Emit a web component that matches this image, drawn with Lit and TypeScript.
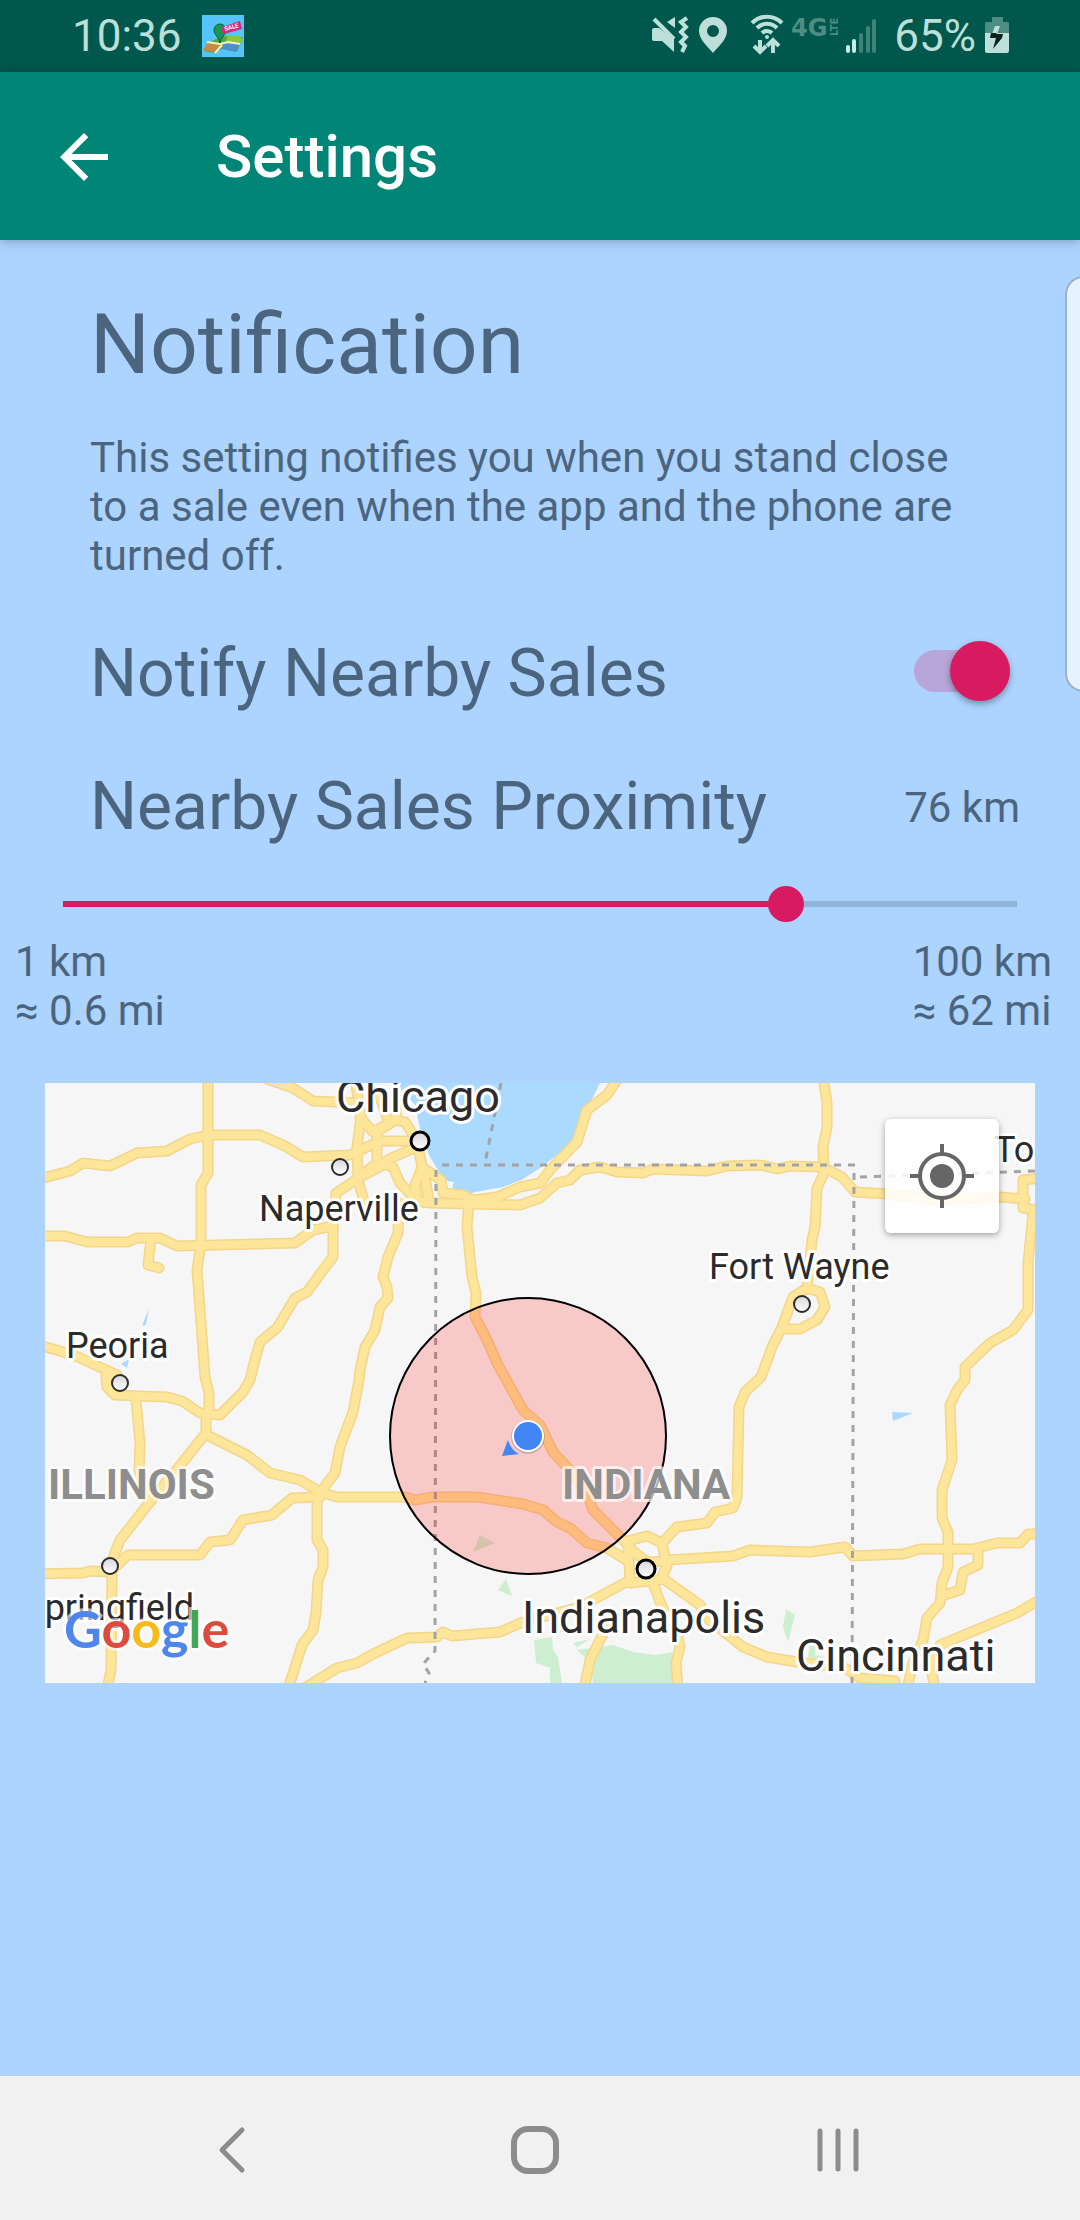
import { LitElement, html, svg, css } from "lit";
import { customElement, state } from "lit/decorators.js";

/* Road centre lines on the 990 x 600 map canvas. */
const ROADS: string[] = [
  "163,-6 163,90 156,102 156,160 152,187 160,294 164,310 164,329 161,334 161,350 133,385 112,410 75,457 70,470 65,483 67,490 66,587 62,606",
  "-6,96 25,88 38,80 65,83 92,70 122,68 145,56 163,52 215,52 240,63 258,74 305,72 335,58 372,58",
  "-6,153 20,153 42,159 83,159 92,155 115,155 132,163 250,160 268,147 288,143",
  "106,156 103,182 114,185",
  "-6,262 15,268 33,274 72,292",
  "72,292 61,293 62,304 70,312 122,314 137,318 155,330 175,332 198,309 205,297 208,284 215,259 232,245 250,215 262,209 278,187 288,174 288,144 291,110 315,94 338,82 344,76 372,64",
  "91,317 95,360 94,387 103,415",
  "162,352 202,372 225,390 255,397 275,409 292,414 360,414 370,417 388,414 432,414 478,421 498,427 512,439 525,445 542,460 562,465 583,478",
  "-6,491 38,490 45,488 65,489 83,472 155,472 165,459 185,457 198,437 227,432 247,415 275,414",
  "272,412 272,457 278,467 278,484 273,497 271,530 268,547 257,562 243,606",
  "277,407 290,390 295,364 308,329 314,297 315,287 320,264 330,247 335,224 343,215 342,204 338,194 343,174 353,150 354,120",
  "258,606 292,585 312,580 328,571 362,555 392,554 398,549 407,553 455,549 478,539 535,524 585,497",
  "222,-4 248,5 268,18 312,20",
  "310,-4 316,34 312,64 313,97 320,122",
  "315,34 328,49 344,40 335,14",
  "332,47 332,80 313,95",
  "350,18 352,36 330,50",
  "335,46 348,37 360,39 372,58 377,84 396,97 398,110 418,112 428,117 452,114 475,104 495,100 505,87 532,59 542,27 562,12 574,-6",
  "335,80 348,84 355,100 370,116",
  "377,84 370,102 372,118",
  "379,88 384,118",
  "370,118 385,120 425,121 475,122 495,115 512,100 525,97 535,87 555,84 572,89 598,90 608,86 662,88 682,83 715,82 733,86 745,83 778,84 797,94 810,109 842,111 895,117 955,114 980,116",
  "424,117 422,144 427,194 431,210 430,234 442,257 452,280 478,327 495,342 508,369 522,384 542,410 548,427 565,444 585,464",
  "583,458 602,453 617,460 622,484 615,497 585,500 583,458",
  "583,464 602,479 622,478",
  "618,459 632,444 662,440 670,429 688,425 692,414 694,324 700,309 716,294 727,264 737,244 748,214 762,205 775,209 780,224 772,237 755,246 737,246",
  "762,206 767,157 770,144 772,105 779,90 778,64 782,44 782,20 778,-6",
  "622,477 688,473 705,467 765,469 800,464 808,473 858,471 875,466 928,466 952,460 975,460 983,451 996,451",
  "620,497 655,522 662,535 698,564 722,574 752,579 798,584 815,595 850,598",
  "608,500 617,524 632,550 635,564 631,580 633,606",
  "565,538 555,557 545,577 539,606",
  "996,95 978,97 978,125 996,128",
  "988,130 983,180 983,227 968,247 945,260 920,284 920,297 912,307 905,322 907,377 897,407 897,435 903,449 903,484 897,500 895,520 882,535 878,557 868,580 862,606",
  "933,467 933,482 918,489 915,507 900,512",
  "996,516 972,530 895,562 885,580 890,606",
];

const BORDERS: string[] = [
  "397,82 810,82",
  "391,87 390,568 378,581 384,590 380,600",
  "809,90 807,600",
  "815,94 990,88",
  "456,0 448,40 440,80",
];

interface Place {
  name: string;
  x: number;
  y: number;
  kind: "town" | "city" | "state";
  end?: boolean;
}

const PLACES: Place[] = [
  { name: "Chicago", x: 291, y: 29, kind: "city" },
  { name: "Naperville", x: 214, y: 138, kind: "town" },
  { name: "Peoria", x: 21, y: 275, kind: "town" },
  { name: "Fort Wayne", x: 664, y: 196, kind: "town" },
  { name: "To", x: 949, y: 79, kind: "town" },
  { name: "Springfield", x: 149, y: 537, kind: "town", end: true },
  { name: "Indianapolis", x: 477, y: 550, kind: "city" },
  { name: "Cincinnati", x: 751, y: 588, kind: "city" },
  { name: "ILLINOIS", x: 3, y: 416, kind: "state" },
  { name: "INDIANA", x: 517, y: 416, kind: "state" },
];

const DOTS = [
  { x: 75, y: 300, big: false },
  { x: 65, y: 483, big: false },
  { x: 295, y: 84, big: false },
  { x: 757, y: 221, big: false },
  { x: 375, y: 58, big: true },
  { x: 601, y: 486, big: true },
];

@customElement("status-bar")
class StatusBar extends LitElement {
  static styles = css`
    :host {
      display: flex;
      align-items: center;
      gap: 8px;
      height: 72px;
      padding: 0 70px 0 72px;
      background: #00574b;
      color: #bcdfda;
      font-size: 44px;
      line-height: 72px;
    }
    .app {
      width: 42px;
      height: 42px;
      margin: 0 auto 0 12px;
    }
    .icon {
      height: 72px;
      flex: none;
    }
    .level {
      margin-left: 8px;
    }
  `;

  render() {
    return html`
      <time>10:36</time>
      <svg class="app" viewBox="0 0 42 42" aria-hidden="true">
        <rect width="42" height="42" fill="#55c4fa" />
        <path d="M8 27L20 21 32 22 41 22 35 37 20 32 11 38 2 36z" fill="#5aa54b" />
        <path d="M6 27L19 29 12 37 1 35z" fill="#c98a45" />
        <path d="M22 29L37 29 34 37 20 34 14 37z" fill="#4d90c4" />
        <path d="M26 21L38 21 41 27 31 29 23 28z" fill="#8cc63f" />
        <path d="M5 27L18 29 26 27 38 29M20 30L13 38" stroke="#f7f3a8" stroke-width="2" fill="none" />
        <path d="M18 28C17 22 12 20 12 15a6 6 0 0 1 12 0C24 20 19 22 18 28z" fill="#159957" stroke="#0a5c3a" stroke-width="1" />
        <path d="M20 12L38 6 40 14 22 19 19 16z" fill="#d62a7c" />
        <text x="23" y="16" transform="rotate(-15 23 16)" font-size="6" font-weight="700" fill="#fff">SALE</text>
      </svg>
      <svg class="icon" width="40" viewBox="0 0 40 72" fill="#bcdfda" aria-hidden="true">
        <path d="M2 30q0-2 2-2h5L24 39v13L12 41H4q-2 0-2-2z" />
        <path d="M4 19L24 39" stroke="#bcdfda" stroke-width="4" />
        <path d="M25 17v11l-8-6z" />
        <path d="M37 18l-6 4 5 5-5 5 5 5-5 5 4 4-3 6" fill="none" stroke="#bcdfda" stroke-width="4" />
      </svg>
      <svg class="icon" width="30" viewBox="0 0 30 72" aria-hidden="true">
        <path fill="#bcdfda" fill-rule="evenodd" d="M15 17a14 14 0 0 0-14 14c0 8 8 15 14 22 6-7 14-14 14-22a14 14 0 0 0-14-14zm0 8a6 6 0 1 1 0 12 6 6 0 0 1 0-12z" />
      </svg>
      <svg class="icon" width="48" viewBox="0 0 48 72" fill="none" stroke="#bcdfda" stroke-width="4" aria-hidden="true">
        <path d="M16 23a21 21 0 0 1 30 0M21 28a14 14 0 0 1 20 0M26 33a7 7 0 0 1 10 0" />
        <circle cx="31" cy="37" r="2" fill="#bcdfda" stroke="none" />
        <path d="M24 40v12M18 46l6 6 6-6M37 53V41M31 46l6-6 6 6" />
      </svg>
      <svg class="icon" width="46" viewBox="0 0 46 72" fill="#4d8d83" font-weight="700" aria-hidden="true">
        <text x="-1" y="36" font-size="24" font-family="DejaVu Sans">4G</text>
        <text x="46" y="36" transform="rotate(-90 46 36)" font-size="10" font-family="DejaVu Sans">LTE</text>
      </svg>
      <svg class="icon" width="32" viewBox="0 0 32 72" stroke-width="4" stroke-linecap="round" aria-hidden="true">
        <path d="M2 47v4M8 41v10" stroke="#c9ece6" />
        <path d="M15 35v16M22 28v23M28 21v30" stroke="#3f8277" />
      </svg>
      <span class="level">65%</span>
      <svg class="icon" width="26" viewBox="0 0 26 72" aria-hidden="true">
        <path d="M8 17h11v5h5q1 0 1 2v9H1v-9q0-2 1-2h6z" fill="#4d8d83" />
        <path d="M1 33h24v18q0 2-2 2H3q-2 0-2-2z" fill="#bcdfda" />
        <path d="M11 26h5l-3 8H8z" fill="#bcdfda" />
        <path d="M7 33h5l1 1h6l-1 4-9 11 3-11H6z" fill="#12201e" />
      </svg>
    `;
  }
}

@customElement("sales-map")
class SalesMap extends LitElement {
  static styles = css`
    :host {
      display: block;
      position: relative;
    }
    .canvas {
      display: block;
      width: 100%;
      background: #f6f6f6;
    }
    .casing,
    .fill {
      fill: none;
      stroke-linejoin: round;
      stroke-linecap: round;
    }
    .casing {
      stroke: #f3d68a;
      stroke-width: 11;
    }
    .fill {
      stroke: #fde59a;
      stroke-width: 8;
    }
    .border {
      fill: none;
      stroke: #a3a3a3;
      stroke-width: 3;
      stroke-dasharray: 7 7;
    }
    .place {
      fill: #2b2b2b;
      stroke: #fff;
      stroke-width: 6;
      stroke-linejoin: round;
      paint-order: stroke;
      font-size: 36px;
    }
    .place.city {
      font-size: 45px;
    }
    .place.state {
      font-size: 42px;
      font-weight: 700;
      fill: #8e8e8e;
      stroke-opacity: 0.7;
    }
    .logo {
      font-family: Lato, sans-serif;
      font-size: 52px;
      font-weight: 700;
      stroke: rgba(255, 255, 255, 0.6);
      stroke-width: 6;
      paint-order: stroke;
    }
    .locate {
      position: absolute;
      top: 36px;
      right: 36px;
      width: 114px;
      height: 114px;
      padding: 0;
      border: 0;
      border-radius: 6px;
      background: rgba(255, 255, 255, 0.85);
      box-shadow: 0 2px 6px rgba(0, 0, 0, 0.35);
      display: grid;
      place-items: center;
    }
  `;

  render() {
    return html`
      <svg class="canvas" viewBox="0 0 990 600" role="img" aria-label="Map of the notification area">
        <defs>
          <linearGradient id="dot" x1="0" y1="0" x2="0" y2="1">
            <stop offset="0" stop-color="#d6d6dc" />
            <stop offset="1" stop-color="#fff" />
          </linearGradient>
        </defs>
        <path fill="#aadaff" d="M350 0L370 22 376 50 385 74 396 92 403 98 409 99 407 105 425 110 458 104 478 96 495 85 532 57 545 20 555 0z" />
        <g fill="#aadaff">
          <path d="M104 225L101 242 97 243zM84 276L82 285 76 281zM847 329L868 330 848 338z" />
        </g>
        <g fill="#ceeed0">
          <path d="M435 452L450 460 428 469zM461 496L467 513 453 507z" />
          <path d="M489 557L507 554 508 567 513 574 517 600 505 600 505 585 491 580z" />
          <path d="M532 567L568 562 588 569 610 572 634 568 634 600 548 600 546 580zM528 560L545 556 532 564z" />
          <path d="M741 526L750 532 743 559 738 544zM765 560L771 562 770 572 780 574 776 577 763 574z" />
        </g>
        ${ROADS.map((p) => svg`<polyline class="casing" points=${p} />`)}
        ${ROADS.map((p) => svg`<polyline class="fill" points=${p} />`)}
        ${BORDERS.map((p) => svg`<polyline class="border" points=${p} />`)}
        <circle cx="483" cy="353" r="138" fill="rgba(255,0,0,0.18)" stroke="#000" stroke-width="2" />
        ${DOTS.map(
          (d) => svg`<circle cx=${d.x} cy=${d.y} r=${d.big ? 9 : 8} fill="url(#dot)"
            stroke=${d.big ? "#000" : "#2b2b2b"} stroke-width=${d.big ? 3 : 2} />`,
        )}
        ${PLACES.map(
          (p) => svg`<text class="place ${p.kind}" x=${p.x} y=${p.y}
            text-anchor=${p.end ? "end" : "start"}>${p.name}</text>`,
        )}
        <path d="M463 357Q466 367 474 371L457 373z" fill="#4285f4" />
        <circle cx="483" cy="354" r="17" fill="rgba(0,0,0,0.15)" />
        <circle cx="483" cy="353" r="16" fill="#fff" />
        <circle cx="483" cy="353" r="14" fill="#4285f4" />
        <text class="logo" x="19" y="565"><tspan fill="#4f86ec">G</tspan><tspan fill="#dd4b3e">o</tspan><tspan fill="#f4bb1a">o</tspan><tspan fill="#4f86ec">g</tspan><tspan fill="#3fa757">l</tspan><tspan fill="#dd4b3e">e</tspan></text>
      </svg>
      <button class="locate" aria-label="My location">
        <svg width="64" height="64" viewBox="0 0 64 64" fill="none" stroke="#666" stroke-width="4" aria-hidden="true">
          <circle cx="32" cy="32" r="22" />
          <circle cx="32" cy="32" r="12" fill="#666" stroke="none" />
          <path d="M32 0v10M32 54v10M0 32h10M54 32h10" />
        </svg>
      </button>
    `;
  }
}

@customElement("app-root")
class AppRoot extends LitElement {
  @state() private proximity = 76;

  static styles = css`
    :host {
      display: flex;
      flex-direction: column;
      min-height: 100vh;
      position: relative;
      overflow: hidden;
      background: #add4ff;
      color: #4b657f;
      font-family: Roboto, "Liberation Sans", sans-serif;
      font-size: 42px;
      line-height: 49px;
    }
    button {
      padding: 0;
      border: 0;
      background: none;
      display: grid;
      place-items: center;
    }
    h1,
    h2,
    p {
      margin: 0;
      font-weight: 400;
    }
    .appbar {
      display: flex;
      align-items: center;
      gap: 96px;
      height: 168px;
      padding: 2px 48px 0;
      background: #008577;
      color: #fff;
      box-shadow: 0 2px 10px rgba(0, 0, 0, 0.25);
      box-sizing: border-box;
    }
    .title {
      font-size: 60px;
      line-height: 70px;
      font-weight: 500;
    }
    main {
      flex: 1;
      padding-top: 56px;
    }
    .intro {
      padding: 0 90px;
    }
    .heading {
      font-size: 84px;
      line-height: 98px;
      margin-bottom: 39px;
    }
    .row {
      display: flex;
      align-items: center;
      justify-content: space-between;
      margin-top: 55px;
      padding: 0 60px 0 90px;
    }
    .label {
      font-size: 66px;
      line-height: 78px;
    }
    .toggle {
      appearance: none;
      display: grid;
      align-items: center;
      width: 96px;
      height: 60px;
      margin: 0 10px 6px;
    }
    .toggle::before {
      content: "";
      grid-area: 1 / 1;
      height: 42px;
      border-radius: 21px;
      background: #b8a5d9;
    }
    .toggle::after {
      content: "";
      grid-area: 1 / 1;
      width: 60px;
      height: 60px;
      border-radius: 50%;
      background: #f1f1f1;
      box-shadow: 0 3px 6px rgba(0, 0, 0, 0.35);
    }
    .toggle:checked::after {
      justify-self: end;
      background: #d81b60;
    }
    .slider {
      appearance: none;
      display: block;
      width: calc(100% - 90px);
      height: 36px;
      margin: 40px 45px 15px;
      background: linear-gradient(to right, #d81b60 var(--fill), #93b4d9 var(--fill)) center / calc(100% - 36px) 6px no-repeat;
    }
    .slider::-webkit-slider-thumb {
      appearance: none;
      width: 36px;
      height: 36px;
      border-radius: 50%;
      background: #d81b60;
    }
    .limits {
      display: flex;
      justify-content: space-between;
      padding: 0 28px 0 15px;
    }
    .map {
      margin: 48px 45px;
    }
    .edge {
      position: absolute;
      top: 276px;
      right: -22px;
      width: 33px;
      height: 412px;
      border: 2px solid #97b2cf;
      border-radius: 22px;
      background: #e6f2ff;
    }
    .nav {
      display: flex;
      justify-content: center;
      gap: 207px;
      height: 144px;
      padding: 4px 10px 0 0;
      box-sizing: border-box;
      background: #f1f1f1;
    }
    .nav button {
      width: 96px;
    }
  `;

  private onSlide(e: Event) {
    this.proximity = Number((e.target as HTMLInputElement).value);
  }

  render() {
    const fill = ((this.proximity - 1) / 99) * 100;
    return html`
      <status-bar></status-bar>
      <header class="appbar">
        <button aria-label="Back">
          <svg width="72" height="72" viewBox="0 0 24 24" fill="#fff" aria-hidden="true">
            <path d="M20 11H7.83l5.59-5.59L12 4l-8 8 8 8 1.41-1.41L7.83 13H20v-2z" />
          </svg>
        </button>
        <h1 class="title">Settings</h1>
      </header>
      <main>
        <section class="intro">
          <h2 class="heading">Notification</h2>
          <p>This setting notifies you when you stand close to a sale even when the app and the phone are turned off.</p>
        </section>
        <div class="row">
          <label class="label" for="notify">Notify Nearby Sales</label>
          <input class="toggle" id="notify" type="checkbox" role="switch" checked />
        </div>
        <div class="row">
          <label class="label" for="proximity">Nearby Sales Proximity</label>
          <output for="proximity">${this.proximity} km</output>
        </div>
        <input
          class="slider"
          id="proximity"
          type="range"
          min="1"
          max="100"
          .value=${String(this.proximity)}
          style="--fill: ${fill}%"
          @input=${this.onSlide}
        />
        <div class="limits">
          <div>1 km<br />≈ 0.6 mi</div>
          <div>100 km<br />≈ 62 mi</div>
        </div>
        <sales-map class="map"></sales-map>
      </main>
      <div class="edge"></div>
      <nav class="nav" aria-label="System">
        <button aria-label="Back">
          <svg width="48" height="48" viewBox="0 0 48 48" fill="none" stroke="#8c8c8c" stroke-width="5" stroke-linecap="round" stroke-linejoin="round" aria-hidden="true">
            <path d="M34 4L14 24l20 20" />
          </svg>
        </button>
        <button aria-label="Home">
          <svg width="48" height="48" viewBox="0 0 48 48" fill="none" stroke="#8c8c8c" stroke-width="6" aria-hidden="true">
            <rect x="3" y="3" width="42" height="42" rx="14" />
          </svg>
        </button>
        <button aria-label="Recent apps">
          <svg width="48" height="48" viewBox="0 0 48 48" stroke="#8c8c8c" stroke-width="5" stroke-linecap="round" aria-hidden="true">
            <path d="M6 5v38M24 5v38M42 5v38" />
          </svg>
        </button>
      </nav>
    `;
  }
}
